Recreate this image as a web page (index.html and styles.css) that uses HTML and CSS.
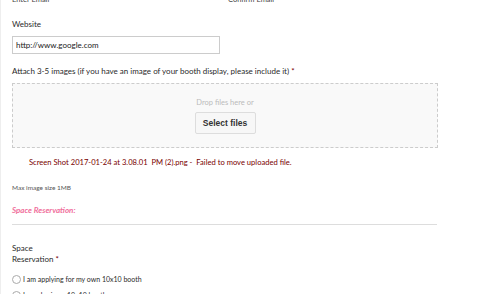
FILE: index.html
```html
<!DOCTYPE html>
<html lang="en">
<head>
    <meta charset="UTF-8">
    <meta name="viewport" content="width=device-width, initial-scale=1.0">
    <title>Booth Application</title>
    <link rel="stylesheet" href="styles.css">
</head>
<body>
    <div class="form-body">
        <div class="sublabels">
            <span class="sublabel">Enter Email</span>
            <span class="sublabel">Confirm Email</span>
        </div>

        <div class="field">
            <label class="field-label">Website</label>
            <input type="text" class="text-input" value="http://www.google.com">
        </div>

        <div class="field">
            <label class="field-label">Attach 3-5 images (if you have an image of your booth display, please include it) <span class="required">*</span></label>
            <div class="dropzone">
                <span class="drop-text">Drop files here or</span>
                <button class="select-btn">Select files</button>
            </div>
            <ul class="upload-errors">
                <li>Screen Shot 2017-01-24 at 3.08.01&nbsp; PM (2).png -&nbsp; Failed to move uploaded file.</li>
            </ul>
            <div class="description">Max image size 1MB</div>
        </div>

        <div class="section">
            <h3 class="section-title">Space Reservation:</h3>
        </div>

        <div class="field">
            <label class="field-label narrow">Space Reservation <span class="required">*</span></label>
            <ul class="choices">
                <li><span class="radio"></span>I am applying for my own 10x10 booth</li>
                <li><span class="radio"></span>I am sharing a 10x10 booth</li>
            </ul>
        </div>
    </div>
</body>
</html>
```

FILE: styles.css
```css
* {
    margin: 0;
    padding: 0;
    box-sizing: border-box;
}

body {
    background: #fff;
    font-family: Lato, "Open Sans", sans-serif;
    color: #2a2a2a;
    border-left: 1px solid #eee;
    height: 294px;
    overflow: hidden;
}

.form-body {
    width: 437px;
    padding-left: 11px;
}

.sublabels {
    display: grid;
    grid-template-columns: 207px 207px;
    gap: 9px;
    margin-top: -5px;
    font-size: 7.5px;
    line-height: 10px;
    color: #444;
}

.field {
    margin-top: 13px;
}

.field + .field {
    margin-top: 11px;
}

.field-label {
    display: block;
    font-size: 8px;
    line-height: 12px;
    color: #2a2a2a;
}

.field-label.narrow {
    width: 52px;
    line-height: 11px;
}

.required {
    color: #790000;
}

.text-input {
    display: block;
    margin-top: 6px;
    width: 208px;
    height: 18px;
    padding: 0 3px;
    border: 1px solid #ccc;
    font-family: Lato, sans-serif;
    font-size: 8px;
    color: #222;
}

.dropzone {
    margin-top: 6px;
    height: 65px;
    border: 1px dashed #ccc;
    background: #f9f9f9;
    display: flex;
    flex-direction: column;
    align-items: center;
    justify-content: center;
    gap: 5px;
}

.drop-text {
    font-size: 7.5px;
    color: #bbb;
}

.select-btn {
    width: 61px;
    height: 22px;
    border: 1px solid #ddd;
    border-radius: 2px;
    background: #f7f7f7;
    font-family: "Liberation Sans", Arial, sans-serif;
    font-weight: bold;
    font-size: 8.5px;
    color: #333;
}

.upload-errors {
    list-style: none;
    padding-left: 17px;
    margin-top: 8px;
    font-size: 7.6px;
    line-height: 12px;
    color: #790000;
}

.description {
    margin-top: 16px;
    font-size: 6.5px;
    color: #555;
}

.section {
    margin-top: 13px;
    padding-bottom: 8px;
    border-bottom: 1px solid #ddd;
    width: 425px;
}

.section-title {
    font-style: italic;
    font-weight: bold;
    font-size: 8px;
    line-height: 12px;
    color: #f06f9c;
}

.section + .field {
    margin-top: 18px;
}

.choices {
    list-style: none;
    margin-top: 9px;
    font-size: 7px;
    line-height: 10px;
    color: #2a2a2a;
}

.choices li {
    display: flex;
    align-items: center;
    gap: 2px;
    margin-bottom: 6px;
}

.radio {
    width: 9px;
    height: 9px;
    border: 1px solid #aaa;
    border-radius: 50%;
    background: #fff;
}
```
